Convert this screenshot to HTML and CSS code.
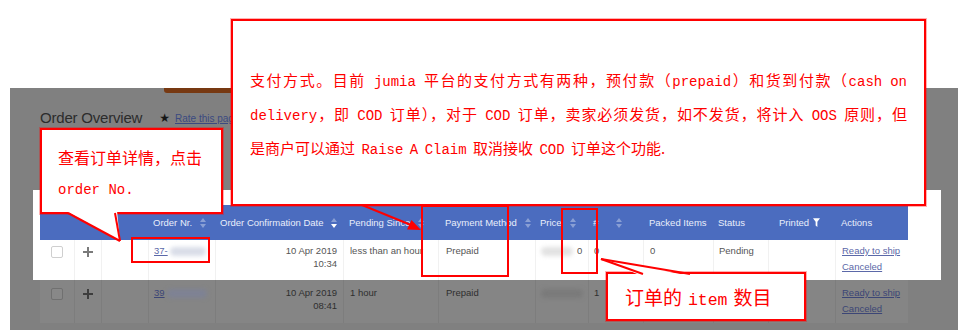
FILE: index.html
```html
<!DOCTYPE html>
<html lang="zh">
<head>
<meta charset="utf-8">
<title>Order Overview</title>
<link rel="stylesheet" href="styles.css">
</head>
<body>
<div class="page">
  <div class="shot">
    <div class="nav-tab"></div>
    <div class="title-row">
      <span class="title">Order Overview</span>
      <span class="star">&#9733;</span>
      <a class="rate">Rate this page</a>
    </div>
    <div class="spot">
      <div class="row thead">
        <div class="c"></div>
        <div class="c"></div>
        <div class="c"></div>
        <div class="c">Order Nr.<svg class="sort" viewBox="0 0 6 10"><polygon points="3,0 6,4 0,4"/><polygon points="0,6 6,6 3,10"/></svg></div>
        <div class="c">Order Confirmation Date<svg class="sort on" viewBox="0 0 6 10"><polygon points="3,0 6,4 0,4"/><polygon class="act" points="0,6 6,6 3,10"/></svg></div>
        <div class="c p6">Pending Since<svg class="sort" viewBox="0 0 6 10"><polygon points="3,0 6,4 0,4"/><polygon points="0,6 6,6 3,10"/></svg></div>
        <div class="c p7">Payment Method<svg class="sort" viewBox="0 0 6 10"><polygon points="3,0 6,4 0,4"/><polygon points="0,6 6,6 3,10"/></svg></div>
        <div class="c">Price<svg class="sort" viewBox="0 0 6 10"><polygon points="3,0 6,4 0,4"/><polygon points="0,6 6,6 3,10"/></svg></div>
        <div class="c">#<svg class="sort wide" viewBox="0 0 6 10"><polygon points="3,0 6,4 0,4"/><polygon points="0,6 6,6 3,10"/></svg></div>
        <div class="c p6">Packed Items</div>
        <div class="c">Status</div>
        <div class="c p11">Printed<svg class="funnel" viewBox="0 0 8 10"><polygon points="0,0 8,0 5,4 5,10 3,8.5 3,4"/></svg></div>
        <div class="c p6">Actions</div>
      </div>
      <div class="row trow r1">
        <div class="c mid"><span class="cb"></span></div>
        <div class="c mid"><svg class="plus" viewBox="0 0 10 10"><rect x="4" y="0" width="2" height="10"/><rect x="0" y="4" width="10" height="2"/></svg></div>
        <div class="c"></div>
        <div class="c"><a class="lnk">37-</a><span class="blur b1"></span></div>
        <div class="c right">10 Apr 2019<br>10:34</div>
        <div class="c p6 clip">less than an hour</div>
        <div class="c p7">Prepaid</div>
        <div class="c right"><span class="blur b2"></span>0</div>
        <div class="c">0</div>
        <div class="c p6">0</div>
        <div class="c">Pending</div>
        <div class="c"></div>
        <div class="c p6"><a class="lnk act1">Ready to ship</a><a class="lnk act2">Canceled</a></div>
      </div>
    </div>
    <div class="row trow r2">
      <div class="c mid"><span class="cb"></span></div>
      <div class="c mid"><svg class="plus" viewBox="0 0 10 10"><rect x="4" y="0" width="2" height="10"/><rect x="0" y="4" width="10" height="2"/></svg></div>
      <div class="c"></div>
      <div class="c"><a class="lnk">39</a><span class="blur b3"></span></div>
      <div class="c right">10 Apr 2019<br>08:41</div>
      <div class="c p6">1 hour</div>
      <div class="c p7">Prepaid</div>
      <div class="c"><span class="blur b4"></span></div>
      <div class="c">1</div>
      <div class="c p6"></div>
      <div class="c"></div>
      <div class="c"></div>
      <div class="c p6"><a class="lnk act1">Ready to ship</a><a class="lnk act2">Canceled</a></div>
    </div>
  </div>

  <div class="callout big">
    <div class="ln just">支付方式。目前<span class="en"> jumia </span>平台的支付方式有两种，预付款（<span class="en">prepaid</span>）和货到付款（<span class="en">cash on</span></div>
    <div class="ln just"><span class="en">delivery</span>，即<span class="en"> COD </span>订单），对于<span class="en"> COD </span>订单，卖家必须发货，如不发货，将计入<span class="en"> OOS </span>原则，但</div>
    <div class="ln">是商户可以通过<span class="en"> Raise A Claim </span>取消接收<span class="en"> COD </span>订单这个功能.</div>
  </div>

  <div class="callout small">
    <div class="ln">查看订单详情，点击</div>
    <div class="ln"><span class="en">order No.</span></div>
  </div>

  <div class="callout item">
    <span>订单的<span class="en"> item </span>数目</span>
  </div>

  <svg class="marks" viewBox="0 0 962 333" width="962" height="333">
    <rect x="132" y="238" width="77" height="24" class="hl"/>
    <rect x="422" y="206" width="86" height="70" class="hl"/>
    <rect x="562" y="209" width="35" height="64" class="hl"/>
    <line x1="362" y1="205" x2="411" y2="225" class="ln-red"/>
    <polygon points="421,230 407,229.5 411.5,220" class="fill-red"/>
    <polygon points="66,211 117,211 120,241" class="fill-white"/>
    <line x1="68" y1="213" x2="120" y2="241" class="ln-red"/>
    <line x1="115" y1="213" x2="120" y2="241" class="ln-red"/>
    <polygon points="601,259 642,276 691,276" class="fill-white"/>
    <line x1="601" y1="259" x2="643" y2="274" class="ln-red"/>
    <line x1="601" y1="259" x2="690" y2="274" class="ln-red"/>
  </svg>
</div>
</body>
</html>
```

FILE: styles.css
```css
* { box-sizing: border-box; }
html, body { margin: 0; padding: 0; background: #ffffff; }
.page {
  position: relative;
  width: 962px;
  height: 333px;
  overflow: hidden;
  font-family: "Liberation Sans", Arial, sans-serif;
}
.shot {
  margin: 88px 0 0 10px;
  width: 948px;
  height: 242px;
  background: #808080;
  display: flex;
  flex-direction: column;
}
.nav-tab {
  margin-left: 154px;
  width: 120px;
  height: 5px;
  background: #773912;
  border-radius: 0 0 3px 3px;
}
.title-row {
  margin-top: 16px;
  padding-left: 30px;
  height: 18px;
  display: flex;
  align-items: center;
}
.title {
  font-size: 15px;
  line-height: 18px;
  color: #2c2c2c;
  letter-spacing: -0.2px;
}
.star {
  margin-left: 17px;
  font-size: 12px;
  color: #161616;
  font-family: "DejaVu Sans", sans-serif;
}
.rate {
  margin-left: 5px;
  font-size: 10px;
  color: #3b4a80;
  text-decoration: underline;
}
.spot {
  margin: 63px 0 0 23px;
  width: 908px;
  background: #ffffff;
  padding: 15px 33px 0 7px;
}
.row {
  display: grid;
  grid-template-columns: 34px 27px 47px 67px 128px 95px 97px 53px 55px 70px 55px 67px 73px;
  width: 868px;
  font-size: 9.5px;
}
.c { padding: 0 5px; white-space: nowrap; }
.c.p6 { padding-left: 6px; }
.c.p7 { padding-left: 7px; }
.c.p11 { padding-left: 11px; }
.thead {
  height: 35px;
  background: #4b6cbf;
  color: #e9eefb;
}
.thead .c {
  display: flex;
  align-items: center;
}
.sort {
  width: 6px;
  height: 10px;
  margin-left: 8px;
  fill: rgba(255, 255, 255, 0.35);
  flex: none;
}
.sort.wide { margin-left: 18px; }
.sort .act { fill: #ffffff; }
.funnel {
  width: 7px;
  height: 9px;
  margin-left: 4px;
  fill: #ffffff;
}
.trow .c {
  padding-top: 4px;
  line-height: 13px;
  border-left: 1px solid #f1f1f1;
  color: #555555;
}
.trow .c:first-child { border-left: none; }
.trow .c.right { text-align: right; padding-right: 6px; }
.trow .c.mid { display: flex; justify-content: center; align-items: flex-start; padding-top: 6px; }
.trow .c.clip { overflow: hidden; }
.r1 { height: 40px; background: #ffffff; }
.r2 {
  margin-left: 30px;
  height: 43px;
  background: #858585;
}
.r2 .c { border-left-color: #7d7d7d; color: #2f2f2f; padding-top: 6px; }
.r2 .c.mid { padding-top: 8px; }
.cb {
  width: 12px;
  height: 12px;
  border: 1px solid #cfcfcf;
  border-radius: 2px;
  background: #ffffff;
}
.r2 .cb { border-color: #707070; background: #888888; }
.plus { width: 10px; height: 10px; fill: #7a7a7a; margin-top: 1px; }
.r2 .plus { fill: #3d3d3d; }
.lnk {
  color: #5b68a8;
  text-decoration: underline;
}
.r2 .lnk { color: #3c4676; }
.act1, .act2 { display: block; }
.act2 { margin-top: 3px; }
.blur {
  display: inline-block;
  vertical-align: middle;
  height: 9px;
  border-radius: 5px;
  background: #d9dde8;
  filter: blur(2px);
}
.b1 { width: 36px; margin-left: 2px; }
.b2 { width: 32px; margin-right: 4px; background: #e2e2e2; }
.b3 { width: 40px; margin-left: 2px; background: #7e8294; }
.b4 { width: 42px; background: #7a7a7a; }

.callout {
  position: absolute;
  z-index: 1;
  background: #ffffff;
  border: 2px solid #ff0000;
  box-shadow: 0 0 0 1px rgba(255, 0, 0, 0.3);
  color: #ff0000;
  font-family: "Noto Sans CJK SC", sans-serif;
}
.en { font-family: "Liberation Mono", "Noto Sans CJK SC", monospace; }
.big {
  left: 231px;
  top: 19px;
  width: 695px;
  height: 187px;
  padding: 42px 17px 0 17px;
  font-size: 15px;
}
.big .ln { line-height: 34px; height: 34px; }
.big .en { font-size: 14px; word-spacing: -2px; }
.big .just { text-align: justify; text-align-last: justify; }
.small {
  left: 40px;
  top: 128px;
  width: 183px;
  height: 86px;
  padding: 12px 0 0 16px;
  font-size: 16px;
}
.small .ln { line-height: 30px; height: 30px; }
.small .en { font-size: 14px; }
.item {
  left: 606px;
  top: 272px;
  width: 200px;
  height: 49px;
  padding-left: 17px;
  display: flex;
  align-items: center;
  font-size: 19px;
}
.item .en { font-size: 16.5px; word-spacing: -4px; }
.marks {
  position: absolute;
  left: 0;
  top: 0;
  z-index: 2;
  pointer-events: none;
}
.hl { fill: none; stroke: #ff0000; stroke-width: 2; }
.ln-red { stroke: #ff0000; stroke-width: 2; }
.fill-red { fill: #ff0000; }
.fill-white { fill: #ffffff; }
```
